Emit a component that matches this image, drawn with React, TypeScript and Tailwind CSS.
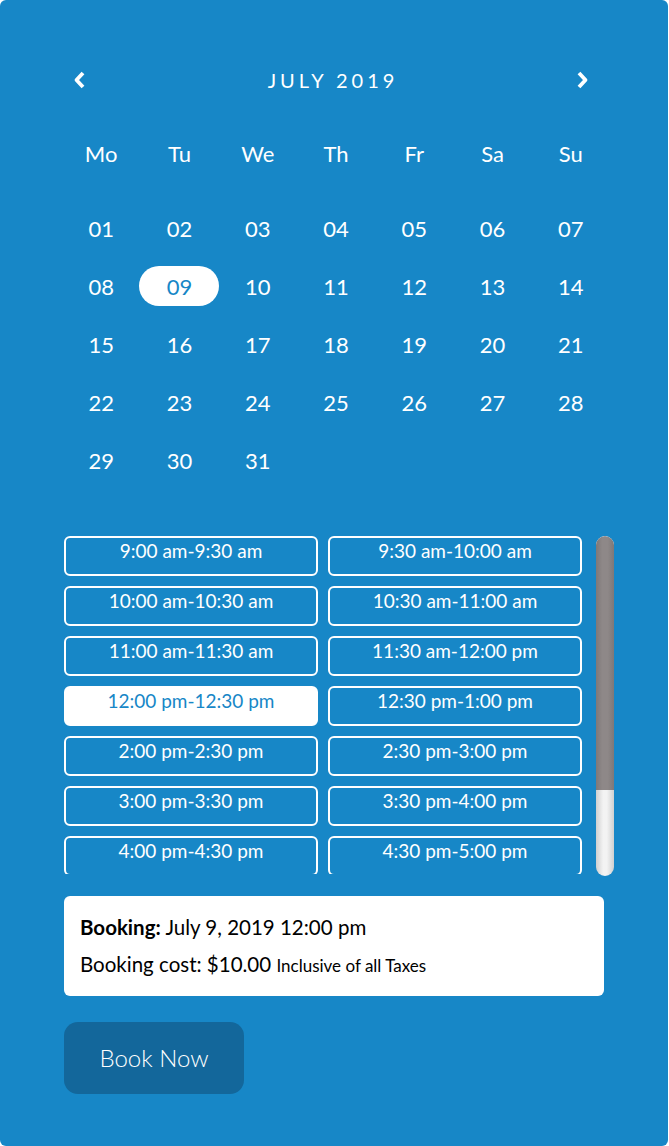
import React from 'react';

const weekdays = ['Mo', 'Tu', 'We', 'Th', 'Fr', 'Sa', 'Su'];

const slots = [
    '9:00 am-9:30 am',
    '9:30 am-10:00 am',
    '10:00 am-10:30 am',
    '10:30 am-11:00 am',
    '11:00 am-11:30 am',
    '11:30 am-12:00 pm',
    '12:00 pm-12:30 pm',
    '12:30 pm-1:00 pm',
    '2:00 pm-2:30 pm',
    '2:30 pm-3:00 pm',
    '3:00 pm-3:30 pm',
    '3:30 pm-4:00 pm',
    '4:00 pm-4:30 pm',
    '4:30 pm-5:00 pm',
];

const pad = (n: number) => (n < 10 ? `0${n}` : `${n}`);

const Chevron = ({ dir }: { dir: 'left' | 'right' }) => (
    <svg width="13" height="18" viewBox="0 0 13 18" fill="none">
        <polyline
            points={dir === 'left' ? '10,2 3.5,9 10,16' : '3,2 9.5,9 3,16'}
            stroke="white"
            strokeWidth="3.8"
            strokeLinejoin="round"
        />
    </svg>
);

const App = () => {
    const days = Array.from({ length: 31 }, (_, i) => i + 1);
    const selectedDay = 9;
    const selectedSlot = '12:00 pm-12:30 pm';

    return (
        <div className="min-h-screen bg-white font-['Lato','Liberation_Sans',sans-serif]">
            <div className="w-[668px] h-[1146px] rounded-[6px] bg-[#1787c7] px-[64px] pt-[66px] text-white">
                {/* Month header */}
                <div className="flex h-[28px] items-center justify-between pl-[9px] pr-[15px]">
                    <button className="flex items-center">
                        <Chevron dir="left" />
                    </button>
                    <div className="text-[20px] tracking-[4px] pl-[4px]">JULY 2019</div>
                    <button className="flex items-center">
                        <Chevron dir="right" />
                    </button>
                </div>

                {/* Calendar */}
                <div className="-ml-[2px] w-[548px]">
                    <div className="mt-[39px] grid grid-cols-7">
                        {weekdays.map((d) => (
                            <div key={d} className="flex h-[40px] items-center justify-center text-[22px]">
                                {d}
                            </div>
                        ))}
                    </div>
                    <div className="mt-[35px] grid grid-cols-7 gap-y-[18px]">
                        {days.map((d) => (
                            <div key={d} className="flex h-[40px] items-center justify-center">
                                {d === selectedDay ? (
                                    <span className="flex h-[40px] w-[80px] shrink-0 items-center justify-center rounded-full bg-white text-[22px] text-[#1787c7]">
                                        {pad(d)}
                                    </span>
                                ) : (
                                    <span className="text-[22px]">{pad(d)}</span>
                                )}
                            </div>
                        ))}
                    </div>
                </div>

                {/* Time slots with scrollbar */}
                <div className="mt-[56px] flex w-[550px] items-start gap-[14px]">
                    <div className="h-[338px] w-[518px] overflow-hidden">
                        <div className="grid grid-cols-2 gap-[10px]">
                            {slots.map((s) => (
                                <button
                                    key={s}
                                    className={
                                        s === selectedSlot
                                            ? 'flex h-[40px] justify-center rounded-[6px] border-2 border-white bg-white pt-[2px] text-[19px] leading-[22px] text-[#1787c7]'
                                            : 'flex h-[40px] justify-center rounded-[6px] border-2 border-white pt-[2px] text-[19px] leading-[22px] text-white'
                                    }
                                >
                                    {s}
                                </button>
                            ))}
                        </div>
                    </div>
                    <div className="h-[340px] w-[18px] overflow-hidden rounded-full bg-[linear-gradient(to_right,#d0d0d0,#f3f3f3_40%,#f3f3f3_60%,#d0d0d0)]">
                        <div className="h-[254px] w-full rounded-t-full rounded-b-[6px] bg-[linear-gradient(to_right,#7e7878,#8e8888_35%,#8e8888_65%,#7e7878)]" />
                    </div>
                </div>

                {/* Booking summary */}
                <div className="mt-[20px] flex h-[100px] w-[540px] flex-col justify-center gap-[13px] rounded-[6px] bg-white pl-[16px] text-black">
                    <div className="text-[20.5px] leading-[24px]">
                        <span className="font-bold">Booking:</span> July 9, 2019 12:00 pm
                    </div>
                    <div className="text-[20.5px] leading-[24px]">
                        Booking cost: $10.00 <span className="text-[17px]">Inclusive of all Taxes</span>
                    </div>
                </div>

                <button className="mt-[26px] flex h-[72px] w-[180px] items-center justify-center rounded-[14px] bg-[#13679b] text-[24px] font-light text-white">
                    Book Now
                </button>
            </div>
        </div>
    );
};

export default App;
